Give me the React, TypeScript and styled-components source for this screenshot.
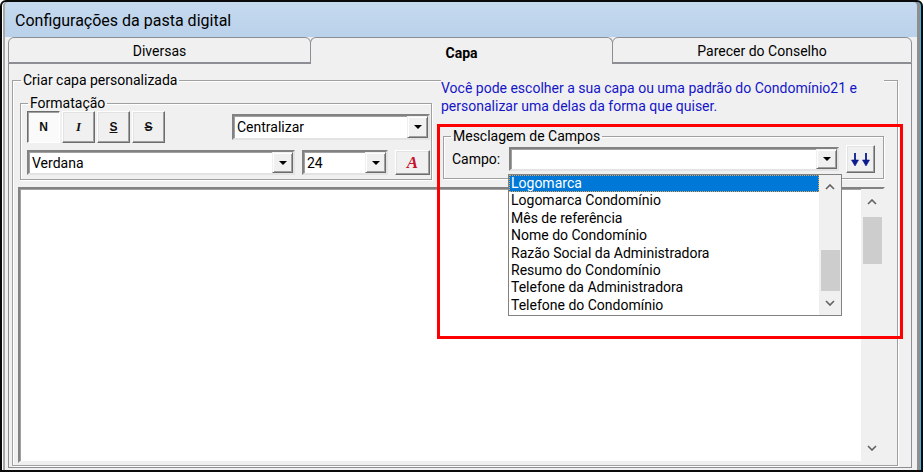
import styled, { createGlobalStyle } from "styled-components";

const GlobalStyle = createGlobalStyle`
  html, body {
    margin: 0;
    padding: 0;
    background: #fff;
  }
  body {
    font-family: Roboto, "Noto Sans", sans-serif;
    color: #000;
  }
  * {
    box-sizing: border-box;
  }
`;

const campos = [
  "Logomarca",
  "Logomarca Condomínio",
  "Mês de referência",
  "Nome do Condomínio",
  "Razão Social da Administradora",
  "Resumo do Condomínio",
  "Telefone da Administradora",
  "Telefone do Condomínio",
];

const Window = styled.div`
  position: relative;
  width: 923px;
  height: 472px;
  display: flex;
  flex-direction: column;
  border: 2px solid #0a0a0a;
  border-radius: 6px 6px 0 0;
  overflow: hidden;
  background: linear-gradient(to bottom, #c6daef 0, #b9d1ea 35px, #f0f0f0 35px);
  box-shadow: inset -1px 0 0 #3ab6e6, inset -4px 0 0 #8e8e8e, inset 1px 0 0 #fff,
    inset 3px 0 0 #a8a8a8;
`;

const TitleBar = styled.div`
  flex: none;
  height: 35px;
  display: flex;
  align-items: center;
  padding: 2px 0 0 13px;
  font-size: 16px;
`;

const TabRow = styled.div`
  flex: none;
  height: 26px;
  display: flex;
  align-items: flex-end;
  padding: 0 9px 0 6px;
`;

const Tab = styled.div<{ $active?: boolean; $w: number }>`
  position: relative;
  z-index: ${(p) => (p.$active ? 2 : 1)};
  width: ${(p) => p.$w}px;
  height: ${(p) => (p.$active ? 27 : 26)}px;
  margin-bottom: ${(p) => (p.$active ? -1 : 0)}px;
  margin-left: -1px;
  &:first-child {
    margin-left: 0;
  }
  display: flex;
  align-items: center;
  justify-content: center;
  padding-top: ${(p) => (p.$active ? 3 : 2)}px;
  border: 1px solid #8c8e94;
  border-bottom: ${(p) => (p.$active ? "none" : "1px solid #8c8e94")};
  border-radius: 6px 6px 0 0;
  background: #f0f0f0;
  font-size: 14px;
  font-weight: ${(p) => (p.$active ? 700 : 400)};
`;

const Panel = styled.div`
  flex: 1;
  display: flex;
  flex-direction: column;
  margin: 0 9px 2px 6px;
  padding: 7px 13px 1px 3px;
  border: 1px solid #8c8e94;
  background: #f0f0f0;
`;

const GroupBox = styled.fieldset<{ $pl: number; $pr: number; $pt: number; $pb: number }>`
  margin: 0;
  min-width: 0;
  padding: ${(p) => `${p.$pt}px ${p.$pr}px ${p.$pb}px ${p.$pl}px`};
  border: 1px solid #a0a0a0;
  box-shadow: inset 1px 1px 0 #fff, 1px 1px 0 #fff;
`;

const OuterGroup = styled(GroupBox)`
  flex: 1;
`;

const Legend = styled.legend<{ $ml: number; $lh: number }>`
  padding: 0 2px;
  margin-left: ${(p) => p.$ml}px;
  font-size: 14px;
  line-height: ${(p) => p.$lh}px;
`;

const TopArea = styled.div`
  display: flex;
  align-items: flex-start;
`;

const FormatGroup = styled(GroupBox)`
  width: 412px;
  margin-left: 2px;
`;

const ButtonRow = styled.div<{ $mt?: number }>`
  display: flex;
  align-items: center;
  gap: 2px;
  margin-top: ${(p) => p.$mt ?? 0}px;
`;

const ToolButton = styled.button<{ $pressed?: boolean; $w?: number; $h?: number; $ml?: number }>`
  width: ${(p) => p.$w ?? 33}px;
  height: ${(p) => p.$h ?? 32}px;
  margin-left: ${(p) => p.$ml ?? 0}px;
  flex: none;
  padding: 0;
  display: flex;
  align-items: center;
  justify-content: center;
  background: ${(p) => (p.$pressed ? "#fafafa" : "#f0f0f0")};
  border: 1px solid;
  border-color: ${(p) =>
    p.$pressed ? "#6c6c6c #fff #fff #6c6c6c" : "#fff #6c6c6c #6c6c6c #fff"};
  box-shadow: ${(p) =>
    p.$pressed
      ? "inset 1px 1px 0 #a0a0a0"
      : "inset -1px -1px 0 #a0a0a0, inset 1px 1px 0 #e3e3e3"};
`;

const Glyph = styled.span<{ $kind: "bold" | "italic" | "under" | "strike" | "color" }>`
  font-family: ${(p) =>
    p.$kind === "italic" || p.$kind === "color"
      ? '"Liberation Serif", serif'
      : '"Liberation Sans", sans-serif'};
  font-weight: 700;
  font-style: ${(p) => (p.$kind === "italic" || p.$kind === "color" ? "italic" : "normal")};
  font-size: ${(p) => (p.$kind === "color" ? 17 : p.$kind === "italic" ? 13 : 12)}px;
  color: ${(p) => (p.$kind === "color" ? "#c8102e" : "#111")};
  text-decoration: ${(p) =>
    p.$kind === "under" ? "underline" : p.$kind === "strike" ? "line-through" : "none"};
`;

const Combo = styled.div<{ $w: number; $h: number; $ml?: number }>`
  position: relative;
  flex: none;
  width: ${(p) => p.$w}px;
  height: ${(p) => p.$h}px;
  margin-left: ${(p) => p.$ml ?? 0}px;
  display: flex;
  background: #fff;
  border: 2px solid;
  border-color: #828282 #e3e3e3 #e3e3e3 #828282;
  box-shadow: inset 1px 1px 0 #a0a0a0;
`;

const ComboText = styled.span`
  flex: 1;
  display: flex;
  align-items: center;
  padding-left: 3px;
  font-size: 14px;
  white-space: nowrap;
`;

const ComboArrow = styled.span`
  width: 21px;
  flex: none;
  display: flex;
  align-items: center;
  justify-content: center;
  background: #f0f0f0;
  border: 1px solid;
  border-color: #f0f0f0 #6c6c6c #6c6c6c #f0f0f0;
  box-shadow: inset 1px 1px 0 #fff, inset -1px -1px 0 #a0a0a0;

  &::after {
    content: "";
    border-left: 4px solid transparent;
    border-right: 4px solid transparent;
    border-top: 4px solid #000;
  }
`;

const RightColumn = styled.div`
  margin: -16px 0 0 9px;
  width: 443px;
`;

const Hint = styled.p`
  margin: 0;
  font-size: 14px;
  line-height: 18px;
  color: #1515c8;
  background: #f0f0f0;
`;

const MergeGroup = styled(GroupBox)`
  margin: 12px 0 0 2px;
  width: 441px;
`;

const FieldRow = styled.div`
  display: flex;
  align-items: center;
  height: 28px;
`;

const FieldLabel = styled.span`
  width: 57px;
  font-size: 14px;
`;

const DropList = styled.div`
  position: absolute;
  z-index: 5;
  top: 25px;
  left: -3px;
  width: 334px;
  display: flex;
  background: #fff;
  border: 1px solid #828282;
`;

const Items = styled.div`
  flex: 1;
`;

const Item = styled.div<{ $selected?: boolean }>`
  height: 17.4px;
  line-height: 17.4px;
  padding-left: 2px;
  font-size: 14px;
  white-space: nowrap;
  color: ${(p) => (p.$selected ? "#fff" : "#000")};
  background: ${(p) => (p.$selected ? "#0078d7" : "transparent")};
  outline: ${(p) => (p.$selected ? "1px dotted #e7a552" : "none")};
  outline-offset: -1px;
`;

const ScrollBar = styled.div<{ $w: number }>`
  width: ${(p) => p.$w}px;
  flex: none;
  display: flex;
  flex-direction: column;
  background: #f0f0f0;
`;

const ScrollArrow = styled.div<{ $h: number }>`
  height: ${(p) => p.$h}px;
  flex: none;
  display: flex;
  align-items: center;
  justify-content: center;
`;

const Track = styled.div`
  flex: 1;
  display: flex;
  flex-direction: column;
`;

const Thumb = styled.div<{ $top: number; $h: number }>`
  margin: ${(p) => p.$top}px 1px 0 2px;
  height: ${(p) => p.$h}px;
  background: #cdcdcd;
`;

const Editor = styled.div`
  height: 276px;
  margin-top: 7px;
  display: flex;
  justify-content: flex-end;
  background: #fff;
  border: 2px solid;
  border-color: #828282 #f0f0f0 #f0f0f0 #828282;
  box-shadow: inset 1px 1px 0 #a0a0a0;
`;

const Highlight = styled.div`
  position: absolute;
  z-index: 10;
  left: 435px;
  top: 122px;
  width: 466px;
  height: 215px;
  border: 3px solid #ff0000;
  pointer-events: none;
`;

const Chevron = ({ down }: { down?: boolean }) => (
  <svg width="10" height="6" viewBox="0 0 10 6">
    <path
      d={down ? "M1 1 L5 5 L9 1" : "M1 5 L5 1 L9 5"}
      fill="none"
      stroke="#606060"
      strokeWidth="1.6"
    />
  </svg>
);

const DoubleDown = () => (
  <svg width="22" height="15" viewBox="0 0 22 15">
    {[5, 16].map((x) => (
      <g key={x} fill="#0b1a8c" stroke="#0b1a8c">
        <line x1={x} y1="1" x2={x} y2="10" strokeWidth="1.8" />
        <path d={`M${x - 3.5} 8 L${x} 14 L${x + 3.5} 8 Z`} strokeWidth="0.6" />
      </g>
    ))}
  </svg>
);

export default function App() {
  return (
    <>
      <GlobalStyle />
      <Window>
        <TitleBar>Configurações da pasta digital</TitleBar>
        <TabRow>
          <Tab $w={303}>Diversas</Tab>
          <Tab $w={303} $active>
            Capa
          </Tab>
          <Tab $w={300}>Parecer do Conselho</Tab>
        </TabRow>
        <Panel>
          <OuterGroup $pl={5} $pr={12} $pt={6} $pb={2}>
            <Legend $ml={3} $lh={18}>
              Criar capa personalizada
            </Legend>
            <TopArea>
              <FormatGroup $pl={6} $pr={1} $pt={0} $pb={4}>
                <Legend $ml={1} $lh={16}>
                  Formatação
                </Legend>
                <ButtonRow>
                  <ToolButton $pressed>
                    <Glyph $kind="bold">N</Glyph>
                  </ToolButton>
                  <ToolButton>
                    <Glyph $kind="italic">I</Glyph>
                  </ToolButton>
                  <ToolButton>
                    <Glyph $kind="under">S</Glyph>
                  </ToolButton>
                  <ToolButton>
                    <Glyph $kind="strike">S</Glyph>
                  </ToolButton>
                  <Combo $w={198} $h={26} $ml={65}>
                    <ComboText>Centralizar</ComboText>
                    <ComboArrow />
                  </Combo>
                </ButtonRow>
                <ButtonRow $mt={7}>
                  <Combo $w={268} $h={25}>
                    <ComboText>Verdana</ComboText>
                    <ComboArrow />
                  </Combo>
                  <Combo $w={86} $h={25} $ml={5}>
                    <ComboText>24</ComboText>
                    <ComboArrow />
                  </Combo>
                  <ToolButton $w={35} $h={25} $ml={5}>
                    <Glyph $kind="color">A</Glyph>
                  </ToolButton>
                </ButtonRow>
              </FormatGroup>
              <RightColumn>
                <Hint>
                  Você pode escolher a sua capa ou uma padrão do Condomínio21 e
                  <br />
                  personalizar uma delas da forma que quiser.
                </Hint>
                <MergeGroup $pl={8} $pr={7} $pt={0} $pb={5}>
                  <Legend $ml={-1} $lh={18}>
                    Mesclagem de Campos
                  </Legend>
                  <FieldRow>
                    <FieldLabel>Campo:</FieldLabel>
                    <Combo $w={330} $h={24}>
                      <ComboText />
                      <ComboArrow />
                      <DropList>
                        <Items>
                          {campos.map((c, i) => (
                            <Item key={c} $selected={i === 0}>
                              {c}
                            </Item>
                          ))}
                        </Items>
                        <ScrollBar $w={22}>
                          <ScrollArrow $h={24}>
                            <Chevron />
                          </ScrollArrow>
                          <Track>
                            <Thumb $top={51} $h={41} />
                          </Track>
                          <ScrollArrow $h={24}>
                            <Chevron down />
                          </ScrollArrow>
                        </ScrollBar>
                      </DropList>
                    </Combo>
                    <ToolButton $w={29} $h={28} $ml={7}>
                      <DoubleDown />
                    </ToolButton>
                  </FieldRow>
                </MergeGroup>
              </RightColumn>
            </TopArea>
            <Editor>
              <ScrollBar $w={22}>
                <ScrollArrow $h={26}>
                  <Chevron />
                </ScrollArrow>
                <Track>
                  <Thumb $top={2} $h={47} />
                </Track>
                <ScrollArrow $h={26}>
                  <Chevron down />
                </ScrollArrow>
              </ScrollBar>
            </Editor>
          </OuterGroup>
        </Panel>
        <Highlight />
      </Window>
    </>
  );
}
